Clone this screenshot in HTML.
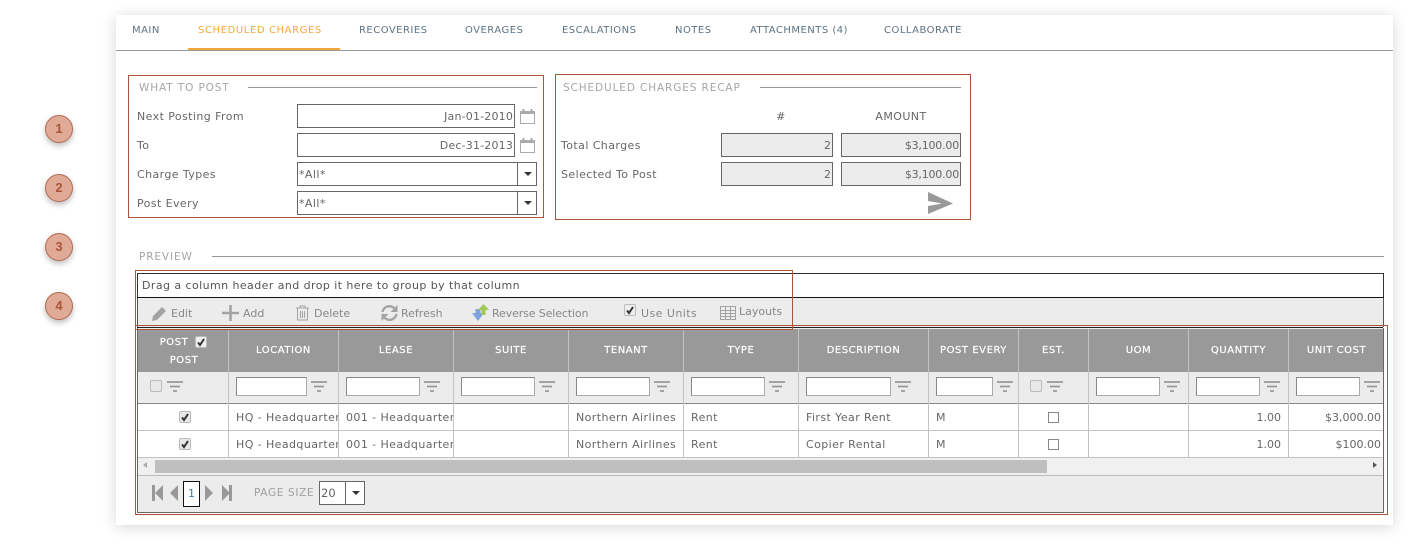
<!DOCTYPE html>
<html><head><meta charset="utf-8"><style>
html,body{margin:0;padding:0;background:#fff}
body{width:1412px;height:548px;position:relative;overflow:hidden;font-family:"DejaVu Sans","Liberation Sans",sans-serif;font-size:11px;color:#666;letter-spacing:.42px}
div,span,svg{position:absolute;box-sizing:border-box}
.t{white-space:nowrap;line-height:14px;height:14px;transform:translateY(1px)}
.r{text-align:right}
.c{text-align:center}
.box{border:1px solid #a8553a}
.in{background:#fff;border:1px solid #666}
.ro{background:#ececec;border:1px solid #666}
.ln{background:#999;height:1px}
.tab{color:#5d7383;font-size:10px;top:23px;letter-spacing:.48px}
.ttl{color:#a5a5a5;font-size:10.5px;letter-spacing:.88px}
.hd{color:#fff;font-size:10px;text-align:center;top:343px;letter-spacing:.55px;-webkit-text-stroke:.2px #fff}
.vl{background:#c2c2c2;width:1px}
.fi{background:#fff;border:1px solid #aaa;border-top-color:#888;border-left-color:#888;top:377px;height:19px}
.cell{top:410px;white-space:nowrap;overflow:hidden;line-height:14px;height:15px;color:#666;transform:translateY(1px)}
.num{letter-spacing:0}
.tb{color:#888;letter-spacing:0}
.cir{left:45px;width:28px;height:28px;border-radius:50%;background:#dfab97;border:1px solid #b5694e;box-shadow:0 3px 6px rgba(0,0,0,.25);color:#a8553a;font-weight:bold;font-size:13px;line-height:26px;text-align:center;font-family:"Liberation Sans",sans-serif;letter-spacing:0}
.cb{width:11px;height:11px;border:1px solid #888;background:#fff}
.ck{width:12px;height:12px;border:1px solid #bbb;border-radius:2px;background:#e8e8e8}
.arrow{width:0;height:0;border-left:4px solid transparent;border-right:4px solid transparent;border-top:4px solid #333}
</style></head><body>
<svg width="0" height="0" style="left:0;top:0"><defs>
<symbol id="f" viewBox="0 0 16 11"><path d="M0 1h16M3 5.500h10M6 10h4" stroke="#999" stroke-width="1.700" fill="none"/></symbol>
<symbol id="cal" viewBox="0 0 15 16"><path d="M.5 3.500h14v12H.5z" fill="#fff" stroke="#aaa"/><path d="M1 3h13v3H1z" fill="#aaa"/><path d="M3.500 1v3M11.500 1v3" stroke="#aaa" stroke-width="2"/></symbol>
<symbol id="tick" viewBox="0 0 12 12"><path d="M3 6.500l2 2.500 4-6" stroke="#333" stroke-width="2" fill="none"/></symbol>
</defs></svg>

<div class="cir" style="top:115px">1</div>
<div class="cir" style="top:174px">2</div>
<div class="cir" style="top:233px">3</div>
<div class="cir" style="top:292px">4</div>

<div style="left:116px;top:15px;width:1277px;height:510px;background:#fff;box-shadow:0 2px 14px rgba(0,0,0,.16)"></div>

<div class="t tab" style="left:132px">MAIN</div>
<div class="t tab" style="left:198px;color:#f5a93b;letter-spacing:.6px">SCHEDULED CHARGES</div>
<div class="t tab" style="left:359px">RECOVERIES</div>
<div class="t tab" style="left:465px">OVERAGES</div>
<div class="t tab" style="left:562px">ESCALATIONS</div>
<div class="t tab" style="left:675px">NOTES</div>
<div class="t tab" style="left:750px">ATTACHMENTS (4)</div>
<div class="t tab" style="left:884px">COLLABORATE</div>
<div style="left:116px;top:50px;width:1277px;height:1px;background:#999"></div>
<div style="left:188px;top:48px;width:152px;height:2px;background:#f5a93b"></div>

<div class="box" style="left:128px;top:75px;width:416px;height:143px"></div>
<div class="t ttl" style="left:139px;top:80px">WHAT TO POST</div>
<div class="ln" style="left:248px;top:87px;width:289px"></div>
<div class="t" style="left:137px;top:109px">Next Posting From</div>
<div class="t" style="left:137px;top:138px">To</div>
<div class="t" style="left:137px;top:167px">Charge Types</div>
<div class="t" style="left:137px;top:196px">Post Every</div>
<div class="in" style="left:297px;top:104px;width:218px;height:24px"></div>
<div class="t r" style="left:400px;width:113px;top:109px;letter-spacing:.18px">Jan-01-2010</div>
<div class="in" style="left:297px;top:133px;width:218px;height:24px"></div>
<div class="t r" style="left:400px;width:113px;top:138px;letter-spacing:.18px">Dec-31-2013</div>
<svg style="left:520px;top:108px" width="15" height="16"><use href="#cal"/></svg>
<svg style="left:520px;top:137px" width="15" height="16"><use href="#cal"/></svg>
<div class="in" style="left:297px;top:162px;width:240px;height:24px"></div>
<div class="t" style="left:299px;top:167px">*All*</div>
<div style="left:517px;top:162px;width:1px;height:24px;background:#666"></div>
<div class="arrow" style="left:524px;top:172px"></div>
<div class="in" style="left:297px;top:191px;width:240px;height:24px"></div>
<div class="t" style="left:299px;top:196px">*All*</div>
<div style="left:517px;top:191px;width:1px;height:24px;background:#666"></div>
<div class="arrow" style="left:524px;top:201px"></div>

<div class="box" style="left:555px;top:74px;width:416px;height:146px"></div>
<div class="t ttl" style="left:563px;top:80px">SCHEDULED CHARGES RECAP</div>
<div class="ln" style="left:760px;top:87px;width:201px"></div>
<div class="t c" style="left:761px;width:40px;top:109px">#</div>
<div class="t c" style="left:861px;width:80px;top:109px">AMOUNT</div>
<div class="t" style="left:561px;top:138px">Total Charges</div>
<div class="t" style="left:561px;top:167px">Selected To Post</div>
<div class="ro" style="left:721px;top:133px;width:112px;height:24px"></div>
<div class="ro" style="left:841px;top:133px;width:120px;height:24px"></div>
<div class="ro" style="left:721px;top:162px;width:112px;height:24px"></div>
<div class="ro" style="left:841px;top:162px;width:120px;height:24px"></div>
<div class="t r" style="left:730px;width:101px;top:138px;letter-spacing:0">2</div>
<div class="t r" style="left:850px;width:109px;top:138px;letter-spacing:-.2px">$3,100.00</div>
<div class="t r" style="left:730px;width:101px;top:167px;letter-spacing:0">2</div>
<div class="t r" style="left:850px;width:109px;top:167px;letter-spacing:-.2px">$3,100.00</div>
<svg style="left:928px;top:192px" width="25" height="23"><path d="M0 0L25 11.500 0 22 0 14 14 11.500 0 9z" fill="#999"/></svg>

<div class="t ttl" style="left:139px;top:249px">PREVIEW</div>
<div class="ln" style="left:212px;top:256px;width:1172px"></div>

<!-- group + toolbar -->
<div style="left:137px;top:273px;width:1247px;height:25px;background:#fff;border:1px solid #333"></div>
<div class="t" style="left:142px;top:278px;color:#555;letter-spacing:.43px">Drag a column header and drop it here to group by that column</div>
<div style="left:137px;top:298px;width:1247px;height:29px;background:#ececec;border-left:1px solid #555;border-right:1px solid #555"></div>
<div style="left:137px;top:297px;width:1247px;height:1px;background:#111"></div>
<div style="left:137px;top:327px;width:1246px;height:1px;background:#222"></div>

<svg style="left:151px;top:305px" width="17" height="17"><path d="M1 16l1-5L11 2l4 4-9 9z" fill="#a3a3a3"/></svg>
<div class="t tb" style="left:171px;top:306px">Edit</div>
<svg style="left:222px;top:305px" width="17" height="16"><path d="M8.500 0v16M0 8h17" stroke="#a3a3a3" stroke-width="2.600"/></svg>
<div class="t tb" style="left:243px;top:306px">Add</div>
<svg style="left:295px;top:305px" width="15" height="16"><path d="M1 3h13M5 3V1h5v2M2.500 3.500v11.500h10V3.500M5.500 6v7M7.500 6v7M9.500 6v7" stroke="#a3a3a3" fill="none"/></svg>
<div class="t tb" style="left:314px;top:306px">Delete</div>
<svg style="left:381px;top:305px" width="17" height="16"><path d="M1.500 7A7 7 0 0 1 14 4M15.500 9A7 7 0 0 1 3 12" stroke="#a3a3a3" stroke-width="2.400" fill="none"/><path d="M16.500 0v7h-7zM.5 16V9h7z" fill="#a3a3a3"/></svg>
<div class="t tb" style="left:401px;top:306px">Refresh</div>
<svg style="left:472px;top:304px" width="17" height="18"><path d="M0 9h3.500V5h5v4H12L6 17z" fill="#7fa3de"/><path d="M6 6h3.500v5h4V6H17L11.500 0z" fill="#9fcb55"/></svg>
<div class="t tb" style="left:492px;top:306px;letter-spacing:-.12px">Reverse Selection</div>
<div class="ck" style="left:624px;top:304px;background:#eee"></div>
<svg style="left:624px;top:304px" width="12" height="12"><use href="#tick"/></svg>
<div class="t tb" style="left:641px;top:306px;letter-spacing:.45px">Use Units</div>
<svg style="left:720px;top:305px" width="16" height="16"><path d="M.5 1.500h15v13H.5zM.5 5.500h15M.5 8.500h15M.5 11.500h15M5.500 1.500v13M10.500 1.500v13" stroke="#a3a3a3" fill="none"/></svg>
<div class="t tb" style="left:739px;top:304px">Layouts</div>

<!-- grid -->
<div style="left:137px;top:328px;width:1247px;height:185px;border:1px solid #666;border-top:0;background:#ececec"></div>
<div style="left:138px;top:329px;width:1245px;height:43px;background:#999"></div>
<div style="left:138px;top:403px;width:1245px;height:55px;background:#fff"></div>
<div style="left:138px;top:403px;width:1245px;height:1px;background:#888"></div>
<div style="left:138px;top:430px;width:1245px;height:1px;background:#c2c2c2"></div>
<div style="left:138px;top:457px;width:1245px;height:1px;background:#c2c2c2"></div>
<div style="left:138px;top:458px;width:1245px;height:17px;background:#f0f0f0"></div>
<div style="left:155px;top:460px;width:892px;height:13px;background:#bfbfbf"></div>
<div style="left:138px;top:475px;width:1245px;height:1px;background:#bbb"></div>
<div style="left:143px;top:462px;width:0;height:0;border:3.500px solid transparent;border-right:4px solid #aaa;border-left:0"></div>
<div style="left:1373px;top:462px;width:0;height:0;border:3.500px solid transparent;border-left:4px solid #555;border-right:0"></div>

<div class="vl" style="left:228px;top:329px;height:129px"></div>
<div class="vl" style="left:338px;top:329px;height:129px"></div>
<div class="vl" style="left:453px;top:329px;height:129px"></div>
<div class="vl" style="left:568px;top:329px;height:129px"></div>
<div class="vl" style="left:683px;top:329px;height:129px"></div>
<div class="vl" style="left:798px;top:329px;height:129px"></div>
<div class="vl" style="left:928px;top:329px;height:129px"></div>
<div class="vl" style="left:1018px;top:329px;height:129px"></div>
<div class="vl" style="left:1088px;top:329px;height:129px"></div>
<div class="vl" style="left:1188px;top:329px;height:129px"></div>
<div class="vl" style="left:1288px;top:329px;height:129px"></div>

<div class="t hd" style="left:158px;width:32px;top:335px">POST</div>
<div class="ck" style="left:195px;top:336px;background:#eee"></div>
<svg style="left:195px;top:336px" width="12" height="12"><use href="#tick"/></svg>
<div class="t hd" style="left:159px;width:50px;top:353px">POST</div>
<div class="t hd" style="left:229px;width:109px">LOCATION</div>
<div class="t hd" style="left:339px;width:114px">LEASE</div>
<div class="t hd" style="left:454px;width:114px">SUITE</div>
<div class="t hd" style="left:569px;width:114px">TENANT</div>
<div class="t hd" style="left:684px;width:114px">TYPE</div>
<div class="t hd" style="left:799px;width:129px">DESCRIPTION</div>
<div class="t hd" style="left:929px;width:89px">POST EVERY</div>
<div class="t hd" style="left:1019px;width:69px">EST.</div>
<div class="t hd" style="left:1089px;width:99px">UOM</div>
<div class="t hd" style="left:1189px;width:99px">QUANTITY</div>
<div class="t hd" style="left:1289px;width:95px">UNIT COST</div>

<div class="ck" style="left:150px;top:380px"></div>
<svg style="left:167px;top:381px" width="16" height="11"><use href="#f"/></svg>
<div class="fi" style="left:236px;width:71px"></div><svg style="left:311px;top:381px" width="16" height="11"><use href="#f"/></svg>
<div class="fi" style="left:346px;width:74px"></div><svg style="left:424px;top:381px" width="16" height="11"><use href="#f"/></svg>
<div class="fi" style="left:461px;width:74px"></div><svg style="left:539px;top:381px" width="16" height="11"><use href="#f"/></svg>
<div class="fi" style="left:576px;width:74px"></div><svg style="left:654px;top:381px" width="16" height="11"><use href="#f"/></svg>
<div class="fi" style="left:691px;width:74px"></div><svg style="left:769px;top:381px" width="16" height="11"><use href="#f"/></svg>
<div class="fi" style="left:806px;width:85px"></div><svg style="left:895px;top:381px" width="16" height="11"><use href="#f"/></svg>
<div class="fi" style="left:936px;width:57px"></div><svg style="left:997px;top:381px" width="16" height="11"><use href="#f"/></svg>
<div class="ck" style="left:1030px;top:380px"></div>
<svg style="left:1047px;top:381px" width="16" height="11"><use href="#f"/></svg>
<div class="fi" style="left:1096px;width:64px"></div><svg style="left:1164px;top:381px" width="16" height="11"><use href="#f"/></svg>
<div class="fi" style="left:1196px;width:64px"></div><svg style="left:1264px;top:381px" width="16" height="11"><use href="#f"/></svg>
<div class="fi" style="left:1296px;width:64px"></div><svg style="left:1364px;top:381px" width="16" height="11"><use href="#f"/></svg>

<div class="ck" style="left:179px;top:411px"></div><svg style="left:179px;top:411px" width="12" height="12"><use href="#tick"/></svg>
<div class="cell" style="left:236px;width:102px">HQ - Headquarters</div>
<div class="cell" style="left:346px;width:107px">001 - Headquarters</div>
<div class="cell" style="left:576px;width:107px">Northern Airlines</div>
<div class="cell" style="left:691px;width:100px">Rent</div>
<div class="cell" style="left:806px;width:120px">First Year Rent</div>
<div class="cell" style="left:936px;width:50px">M</div>
<div class="cb" style="left:1048px;top:412px"></div>
<div class="cell r num" style="left:1189px;width:92px">1.00</div>
<div class="cell r num" style="left:1289px;width:92px">$3,000.00</div>

<div class="ck" style="left:179px;top:438px"></div><svg style="left:179px;top:438px" width="12" height="12"><use href="#tick"/></svg>
<div class="cell" style="left:236px;width:102px;top:437px">HQ - Headquarters</div>
<div class="cell" style="left:346px;width:107px;top:437px">001 - Headquarters</div>
<div class="cell" style="left:576px;width:107px;top:437px">Northern Airlines</div>
<div class="cell" style="left:691px;width:100px;top:437px">Rent</div>
<div class="cell" style="left:806px;width:120px;top:437px">Copier Rental</div>
<div class="cell" style="left:936px;width:50px;top:437px">M</div>
<div class="cb" style="left:1048px;top:439px"></div>
<div class="cell r num" style="left:1189px;width:92px;top:437px">1.00</div>
<div class="cell r num" style="left:1289px;width:92px;top:437px">$100.00</div>

<!-- pager -->
<svg style="left:152px;top:485px" width="80" height="16"><path d="M0 0h3v16H0zM11 0v16L3 8zM26 0v16L18 8zM53 0v16l8-8zM70 0l8 8-8 8zM77 0h3v16h-3z" fill="#999"/></svg>
<div style="left:183px;top:481px;width:17px;height:26px;background:#fff;border:1px solid #111"></div>
<div class="t c num" style="left:183px;width:17px;top:486px;color:#3b7fb5">1</div>
<div class="t" style="left:254px;top:485px;color:#a0a0a0;font-size:10.500px;letter-spacing:.65px">PAGE SIZE</div>
<div class="in" style="left:319px;top:481px;width:46px;height:24px"></div>
<div style="left:345px;top:481px;width:1px;height:24px;background:#666"></div>
<div class="t num" style="left:321px;top:485px;font-size:11.500px">20</div>
<div class="arrow" style="left:352px;top:491px"></div>

<!-- annotation rectangles -->
<div class="box" style="left:135px;top:270px;width:658px;height:60px"></div>
<div class="box" style="left:135px;top:325px;width:1253px;height:190px"></div>
</body></html>
